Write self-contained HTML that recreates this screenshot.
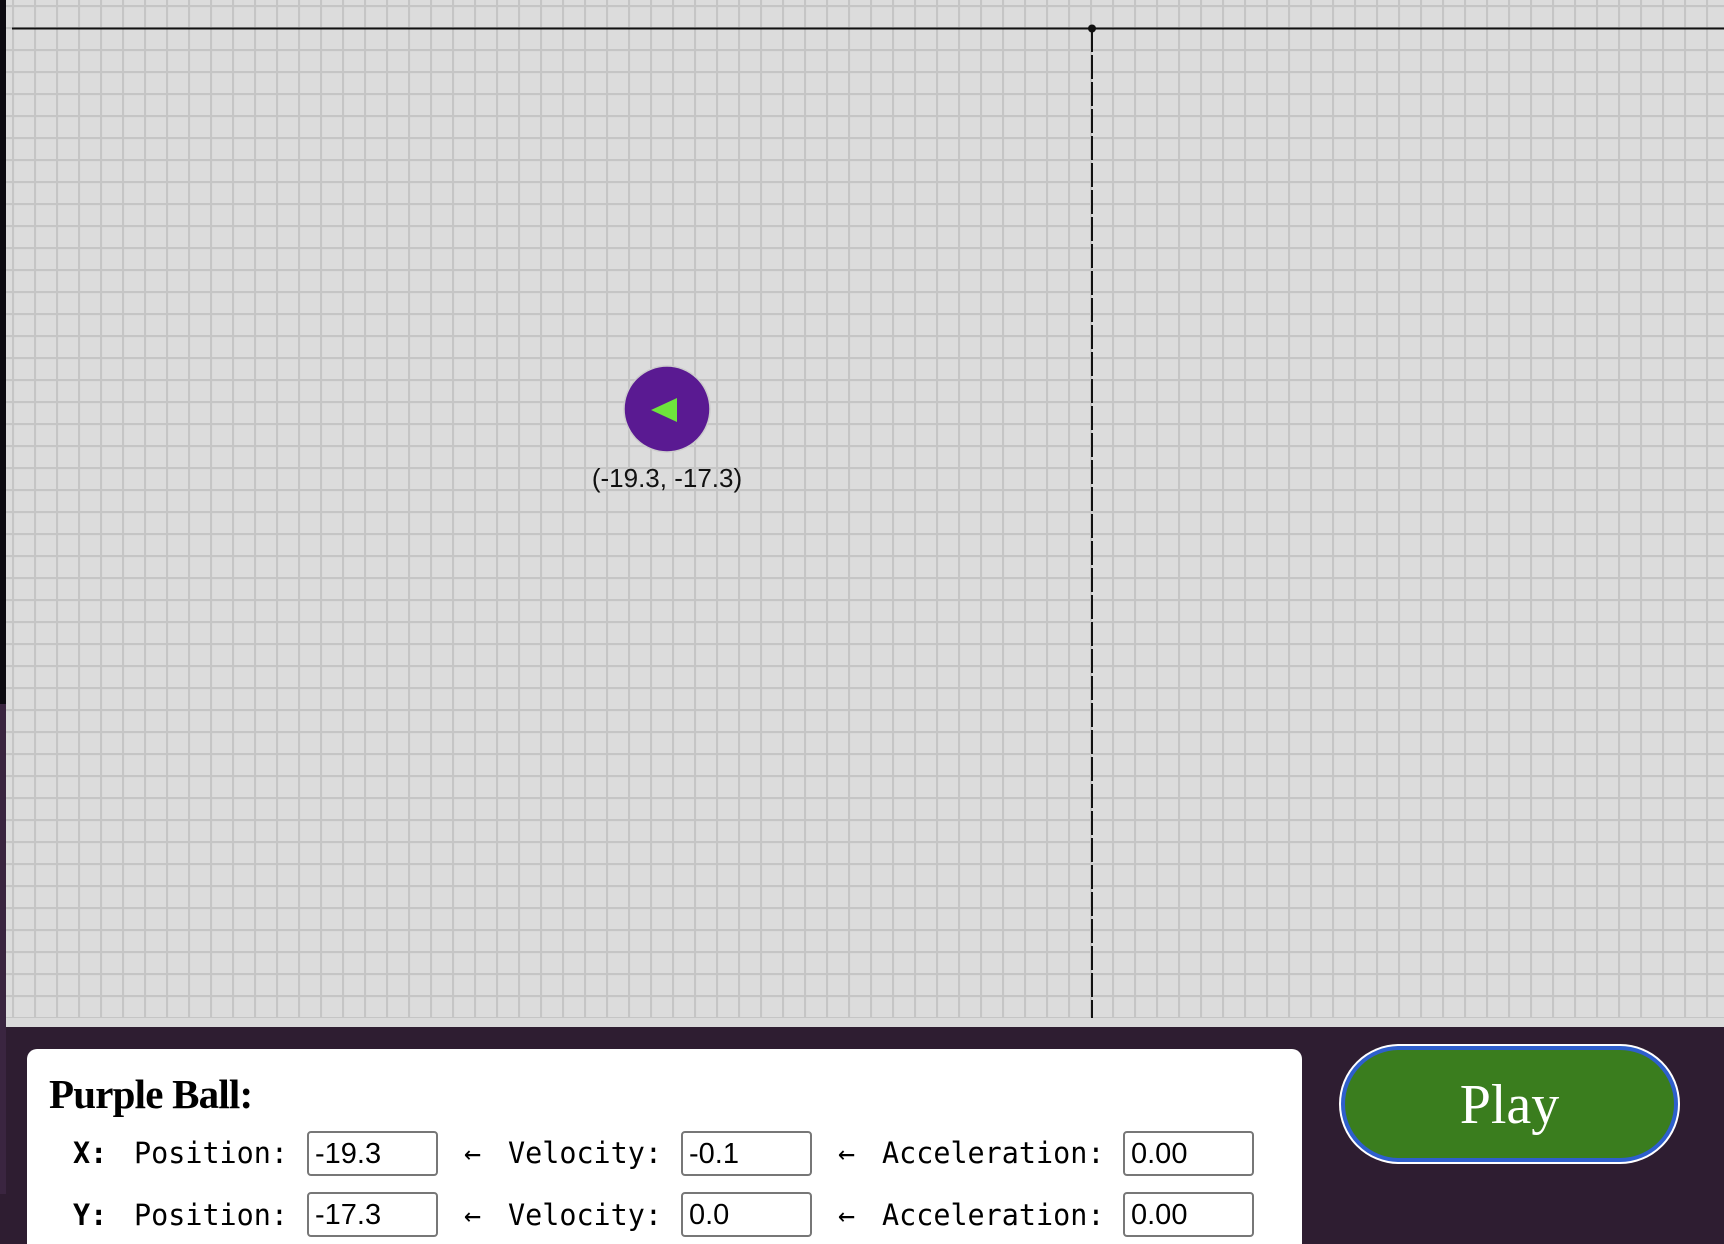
<!DOCTYPE html>
<html><head><meta charset="utf-8"><style>
html,body{margin:0;padding:0;width:1724px;height:1244px;overflow:hidden;background:#2e1d31;position:relative}
.panel{position:absolute;left:27px;top:1049px;width:1275px;height:220px;background:#fff;border-radius:10px}
.title{position:absolute;left:49px;top:1070px;font:bold 41px "Liberation Serif",serif;color:#000;letter-spacing:-0.8px}
.m{position:absolute;font:29px "DejaVu Sans Mono","Liberation Mono",monospace;color:#000;white-space:pre;transform:scaleX(0.98);transform-origin:0 0}
.in{position:absolute;width:131px;height:45px;border:2px solid #777;border-radius:4px;box-sizing:border-box;font:29px "Liberation Sans",sans-serif;line-height:42px;padding-left:6px;background:#fff}
.play{position:absolute;left:1341px;top:1046px;width:337px;height:116px;box-sizing:border-box;border-radius:58px;background:#3a7d1e;border:4px solid #2e5fcc;box-shadow:0 0 0 2px #fff;color:#fff;font:56px "Liberation Serif",serif;text-align:center;line-height:110px}
</style></head><body>
<div style="position:absolute;left:0;top:0;width:6px;height:704px;background:#0c0a10"></div>
<div style="position:absolute;left:0;top:704px;width:6px;height:490px;background:#3a2540"></div>
<svg style="position:absolute;left:6px;top:0" width="1718" height="1027" xmlns="http://www.w3.org/2000/svg">
<defs><pattern id="g" x="6" y="5" width="22" height="22" patternUnits="userSpaceOnUse"><rect width="22" height="22" fill="#dcdcdc"/><path d="M1 0V22M0 1H22" stroke="#c5c5c5" stroke-width="2.2"/></pattern></defs>
<rect width="1718" height="1027" fill="#dadada"/>
<rect x="0" y="0" width="1718" height="1018" fill="url(#g)"/>
<line x1="6" y1="28.5" x2="1718" y2="28.5" stroke="#111" stroke-width="2"/>
<line x1="1086" y1="28" x2="1086" y2="1018" stroke="#111" stroke-width="2" stroke-dasharray="24 3"/>
<circle cx="1086" cy="28.5" r="4" fill="#111"/>
<circle cx="661" cy="409" r="43" fill="#5a1a92" stroke="#ccc" stroke-width="1.5"/>
<polygon points="645,410 671,398 671,422" fill="#6ee33c"/>
<text x="661" y="487" text-anchor="middle" font-family="Liberation Sans,sans-serif" font-size="26" fill="#111">(-19.3, -17.3)</text>
</svg>
<div class="panel"></div>
<div class="title">Purple Ball:</div>
<div class="m" style="left:73px;top:1136px"><b>X:</b></div>
<div class="m" style="left:134px;top:1136px">Position:</div>
<div class="m" style="left:73px;top:1198px"><b>Y:</b></div>
<div class="m" style="left:134px;top:1198px">Position:</div>
<div class="m" style="left:464px;top:1136px">←</div>
<div class="m" style="left:508px;top:1136px">Velocity:</div>
<div class="m" style="left:464px;top:1198px">←</div>
<div class="m" style="left:508px;top:1198px">Velocity:</div>
<div class="m" style="left:838px;top:1136px">←</div>
<div class="m" style="left:882px;top:1136px">Acceleration:</div>
<div class="m" style="left:838px;top:1198px">←</div>
<div class="m" style="left:882px;top:1198px">Acceleration:</div>
<div class="in" style="left:307px;top:1131px">-19.3</div>
<div class="in" style="left:681px;top:1131px">-0.1</div>
<div class="in" style="left:1123px;top:1131px">0.00</div>
<div class="in" style="left:307px;top:1192px">-17.3</div>
<div class="in" style="left:681px;top:1192px">0.0</div>
<div class="in" style="left:1123px;top:1192px">0.00</div>
<div class="play">Play</div>
</body></html>
